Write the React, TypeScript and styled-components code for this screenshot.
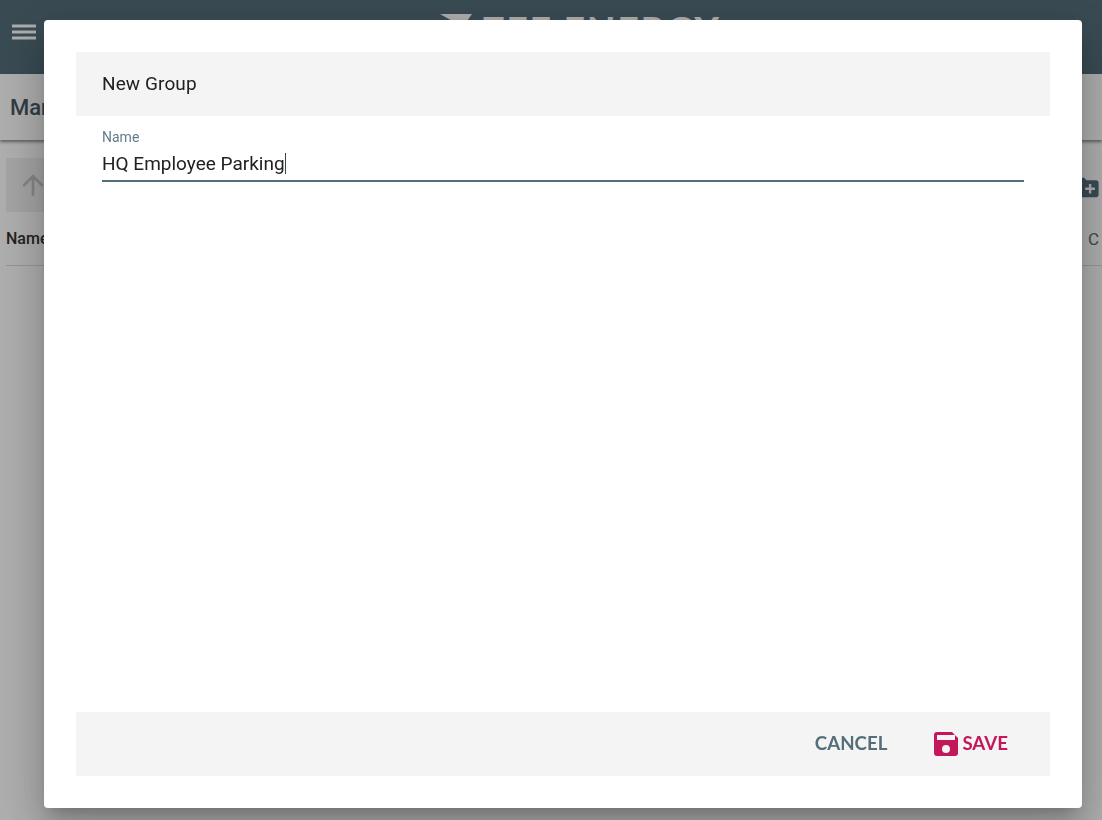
import styled, { createGlobalStyle } from "styled-components";

const GlobalStyle = createGlobalStyle`
  html, body {
    margin: 0;
    height: 100%;
    overflow: hidden;
    background: #fff;
    font-family: Roboto, "Liberation Sans", sans-serif;
  }
`;

function App() {
  return (
    <>
      <GlobalStyle />
      <Page>
        <TopBar>
          <MenuIcon viewBox="0 0 24 24">
            <path d="M0 4.5h24v3H0zM0 10.5h24v3H0zM0 16.5h24v3H0z" fill="currentColor" />
          </MenuIcon>
          <Logo>
            <LogoMark viewBox="0 0 32 20">
              <path d="M0 0h32L18 20 14 8z" fill="currentColor" />
            </LogoMark>
            ZEE ENERGY
          </Logo>
        </TopBar>
        <TitleBar>Manage Groups</TitleBar>
        <Toolbar>
          <UpButton>
            <svg width="32" height="32" viewBox="0 0 24 24">
              <path d="M4 12l1.41 1.41L11 7.83V20h2V7.83l5.58 5.59L20 12l-8-8-8 8z" fill="currentColor" />
            </svg>
          </UpButton>
          <AddFolder viewBox="0 0 24 24">
            <path
              d="M20 6h-8l-2-2H4c-1.1 0-2 .9-2 2v12c0 1.1.9 2 2 2h16c1.1 0 2-.9 2-2V8c0-1.1-.9-2-2-2zm-1 8h-3v3h-2v-3h-3v-2h3V9h2v3h3v2z"
              fill="currentColor"
            />
          </AddFolder>
        </Toolbar>
        <TableHead>
          <HeadCell>Name</HeadCell>
          <HeadCell $muted>C</HeadCell>
        </TableHead>
      </Page>

      <Overlay>
        <Dialog>
          <DialogTitle>New Group</DialogTitle>
          <Form>
            <FieldLabel>Name</FieldLabel>
            <FieldValue>
              HQ Employee Parking
              <Caret />
            </FieldValue>
          </Form>
          <DialogActions>
            <ActionButton color="#546e7a">CANCEL</ActionButton>
            <ActionButton color="#c2185b">
              <SaveIcon viewBox="0 0 24 24">
                <path
                  fillRule="evenodd"
                  d="M3 0h15l6 6v15a3 3 0 0 1-3 3H3a3 3 0 0 1-3-3V3a3 3 0 0 1 3-3zm0 3v5h18V3zm9 10a4 4 0 1 0 0 8 4 4 0 0 0 0-8z"
                  fill="currentColor"
                />
              </SaveIcon>
              SAVE
            </ActionButton>
          </DialogActions>
        </Dialog>
      </Overlay>
    </>
  );
}

// STYLED COMPONENTS
const Page = styled.div`
  width: 1102px;
  height: 820px;
  overflow: hidden;
  display: flex;
  flex-direction: column;
`;

const TopBar = styled.header`
  height: 74px;
  flex: none;
  background: #546e7a;
  color: #fff;
  display: flex;
  align-items: flex-start;
  padding: 20px 0 0 12px;
  box-sizing: border-box;
`;

const MenuIcon = styled.svg`
  width: 24px;
  height: 24px;
  color: #fff;
`;

const Logo = styled.div`
  display: flex;
  align-items: flex-start;
  gap: 10px;
  margin: -12px 0 0 404px;
  font-family: Lato, sans-serif;
  font-weight: 900;
  font-size: 37px;
  line-height: 46px;
  letter-spacing: 2px;
  white-space: nowrap;
`;

const LogoMark = styled.svg`
  width: 32px;
  height: 20px;
  margin-top: 6px;
`;

const TitleBar = styled.div`
  height: 66px;
  flex: none;
  background: #fff;
  color: #455a64;
  box-shadow: 0 2px 3px rgba(0, 0, 0, 0.45);
  display: flex;
  align-items: center;
  padding-left: 10px;
  font-size: 22px;
  font-weight: 500;
  position: relative;
`;

const Toolbar = styled.div`
  display: flex;
  align-items: center;
  justify-content: space-between;
  margin-top: 18px;
  padding: 0 1px 0 6px;
  height: 54px;
`;

const UpButton = styled.div`
  width: 54px;
  height: 54px;
  background: #f0f0f0;
  color: #c4c4c4;
  display: flex;
  align-items: center;
  justify-content: center;
`;

const AddFolder = styled.svg`
  width: 29px;
  height: 29px;
  color: #546e7a;
  margin-top: 4px;
`;

const TableHead = styled.div`
  display: flex;
  justify-content: space-between;
  margin-left: 6px;
  height: 54px;
  padding: 17px 3px 0 0;
  box-sizing: border-box;
  border-bottom: 1px solid #dcdcdc;
`;

const HeadCell = styled.span<{ $muted?: boolean }>`
  font-size: ${(props) => (props.$muted ? "17px" : "16px")};
  font-weight: ${(props) => (props.$muted ? 400 : 500)};
  color: ${(props) => (props.$muted ? "#666" : "#333")};
`;

const Overlay = styled.div`
  position: fixed;
  inset: 0;
  background: rgba(0, 0, 0, 0.32);
  display: flex;
  padding: 20px 20px 12px 44px;
  box-sizing: border-box;
`;

const Dialog = styled.div`
  flex: 1;
  background: #fff;
  border-radius: 4px;
  padding: 32px;
  display: flex;
  flex-direction: column;
  box-shadow: 0 11px 15px -7px rgba(0, 0, 0, 0.2), 0 24px 38px 3px rgba(0, 0, 0, 0.14),
    0 9px 46px 8px rgba(0, 0, 0, 0.12);
`;

const DialogTitle = styled.div`
  height: 62px;
  padding: 0 0 2px 26px;
  flex: none;
  background: #f4f4f4;
  display: flex;
  align-items: center;
  font-size: 19px;
  letter-spacing: 0.1px;
  color: #212121;
`;

const Form = styled.div`
  flex: 1;
  padding: 13px 26px 0;
`;

const FieldLabel = styled.div`
  font-size: 14px;
  line-height: 16px;
  color: #607d8b;
`;

const FieldValue = styled.div`
  display: flex;
  align-items: center;
  height: 37px;
  padding-top: 1px;
  box-sizing: border-box;
  border-bottom: 2px solid #546e7a;
  font-size: 19px;
  color: #212121;
`;

const Caret = styled.span`
  width: 1.5px;
  height: 21px;
  background: #37474f;
`;

const DialogActions = styled.div`
  height: 62px;
  padding: 0 42px 2px 0;
  flex: none;
  background: #f4f4f4;
  display: flex;
  align-items: center;
  justify-content: flex-end;
  gap: 47px;
`;

const ActionButton = styled.div<{ color: string }>`
  display: flex;
  align-items: center;
  gap: 4px;
  font-family: Lato, sans-serif;
  font-size: 18.7px;
  font-weight: 700;
  color: ${(props) => props.color};
`;

const SaveIcon = styled.svg`
  width: 24px;
  height: 24px;
  margin-top: 2px;
`;

export default App;
